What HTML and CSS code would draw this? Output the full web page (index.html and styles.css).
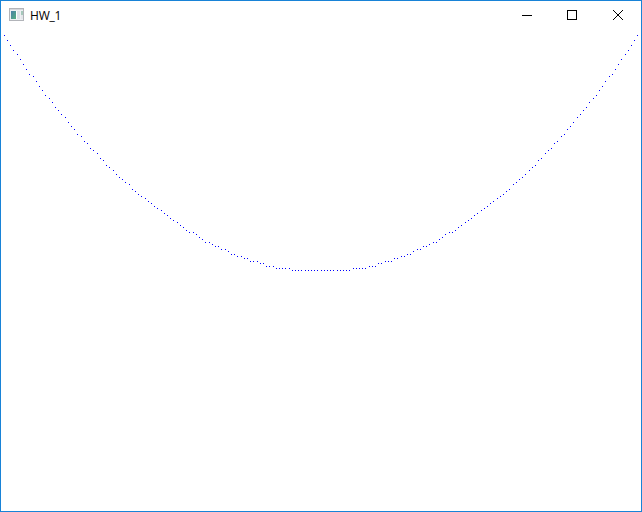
FILE: index.html
```html
<!DOCTYPE html>
<html lang="en">
<head>
<meta charset="utf-8">
<title>HW_1</title>
<link rel="stylesheet" href="styles.css">
</head>
<body>
<main class="window">
  <header class="titlebar">
    <svg class="app-icon" width="16" height="16" viewBox="0 0 16 16" shape-rendering="crispEdges">
      <defs>
        <linearGradient id="pane" x1="0" y1="0" x2="1" y2="1">
          <stop offset="0" stop-color="#4a7fa8"/>
          <stop offset="1" stop-color="#55b080"/>
        </linearGradient>
      </defs>
      <rect x="0.5" y="1.5" width="14" height="12" fill="#eef0f3" stroke="#b2b4b9"/>
      <rect x="1" y="2" width="13" height="1" fill="#d5d7dc"/>
      <rect x="2" y="4" width="5" height="8" fill="url(#pane)"/>
      <rect x="7" y="4" width="1" height="8" fill="#fff"/>
      <rect x="8" y="4" width="3" height="8" fill="#dfe2e8"/>
      <rect x="12" y="4" width="2" height="4" fill="#a5c8bb"/>
      <rect x="12" y="8" width="2" height="4" fill="#e4e6ea"/>
    </svg>
    <span class="title">HW_1</span>
    <div class="controls">
      <svg class="control minimize" viewBox="0 0 10 10"><path d="M0 5.5H10"/></svg>
      <svg class="control" viewBox="0 0 10 10"><path d="M.5 .5H9.5V9.5H.5Z"/></svg>
      <svg class="control close" viewBox="0 0 10 10"><path d="M0 0L10 10M10 0L0 10"/></svg>
    </div>
  </header>
  <svg class="plot" width="640" height="480" viewBox="0 0 640 480"><path id="curve"/></svg>
</main>
<script src="plot.js"></script>
</body>
</html>
```
FILE: styles.css
```css
body {
  margin: 0;
}

.window {
  box-sizing: border-box;
  width: 642px;
  height: 512px;
  overflow: hidden;
  border: 1px solid #1883d7;
  background: #fff;
}

.titlebar {
  display: flex;
  align-items: center;
  height: 30px;
  padding: 0 18px 0 8px;
}

.app-icon {
  margin-top: -2px;
}

.title {
  margin-left: 5px;
  color: #000;
  font: 12px/16px "Open Sans", "Noto Sans", sans-serif;
  letter-spacing: -0.2px;
}

.controls {
  display: flex;
  gap: 36px;
  margin: -2px 0 0 auto;
}

.control {
  width: 10px;
  height: 10px;
  fill: none;
  stroke: #000;
  shape-rendering: crispEdges;
}

.control.minimize {
  margin-right: -1px;
}

.control.close {
  shape-rendering: auto;
}

.plot {
  display: block;
}

#curve {
  fill: #00f;
  shape-rendering: crispEdges;
}
```
FILE: plot.js
```js
// Parabola y = x * x, sampled every 0.01 over (-1, 1), one pixel per sample.
let d = "";
for (let k = -99; k <= 99; k++) {
  const x = Math.floor((k + 100) * 320 / 100);
  const n = Math.floor(k * k / 100);
  const y = 239 - Math.floor(n * 240 / 100);
  d += `M${x} ${y}h1v1h-1z`;
}
document.getElementById("curve").setAttribute("d", d);
```
